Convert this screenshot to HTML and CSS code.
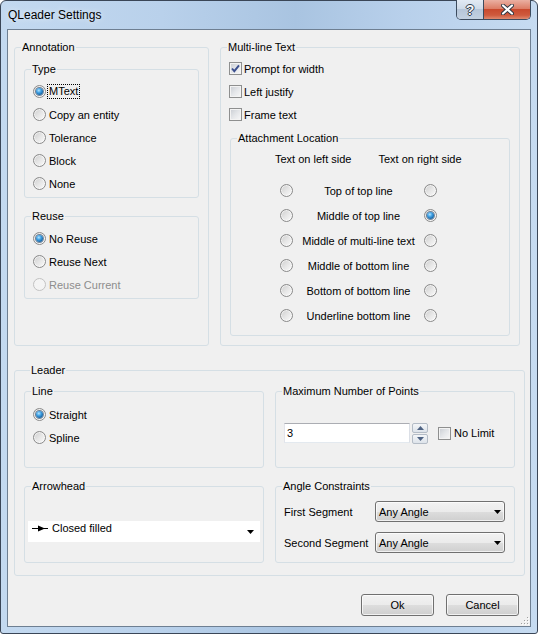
FILE: index.html
```html
<!DOCTYPE html>
<html>
<head>
<meta charset="utf-8">
<title>QLeader Settings</title>
<link rel="stylesheet" href="styles.css">
</head>
<body>
<div class="window">
  <div class="titlebar">
    <span class="title">QLeader Settings</span>
    <div class="caption">
      <span class="cbtn help">?</span>
      <span class="cbtn close">
        <svg width="13" height="11" viewBox="0 0 13 11"><path d="M2 1.5 L11 9.5 M11 1.5 L2 9.5" stroke="#2b3540" stroke-width="4" stroke-linecap="round"/><path d="M2 1.5 L11 9.5 M11 1.5 L2 9.5" stroke="#ffffff" stroke-width="2.2" stroke-linecap="round"/></svg>
      </span>
    </div>
  </div>
  <div class="client">
    <div class="top-row">
      <div class="group annotation">
        <div class="gt">Annotation</div>
        <div class="group sub type">
          <div class="gt">Type</div>
          <div class="radios">
            <div class="row"><span class="radio on"></span><span class="focus">MText</span></div>
            <div class="row"><span class="radio"></span><span>Copy an entity</span></div>
            <div class="row"><span class="radio"></span><span>Tolerance</span></div>
            <div class="row"><span class="radio"></span><span>Block</span></div>
            <div class="row"><span class="radio"></span><span>None</span></div>
          </div>
        </div>
        <div class="group sub reuse">
          <div class="gt">Reuse</div>
          <div class="radios">
            <div class="row"><span class="radio on"></span><span>No Reuse</span></div>
            <div class="row"><span class="radio"></span><span>Reuse Next</span></div>
            <div class="row disabled"><span class="radio"></span><span>Reuse Current</span></div>
          </div>
        </div>
      </div>
      <div class="group multiline">
        <div class="gt">Multi-line Text</div>
        <div class="checks">
          <div class="row"><span class="cb"><svg width="11" height="11" viewBox="0 0 11 11"><path d="M2 5.5 L4.3 8.2 L9 2.3" fill="none" stroke="#3b4f8e" stroke-width="1.9"/></svg></span><span>Prompt for width</span></div>
          <div class="row"><span class="cb"></span><span>Left justify</span></div>
          <div class="row"><span class="cb"></span><span>Frame text</span></div>
        </div>
        <div class="group sub attach">
          <div class="gt">Attachment Location</div>
          <div class="heads"><span>Text on left side</span><span>Text on right side</span></div>
          <div class="attach-grid">
            <span class="radio"></span><span class="alabel">Top of top line</span><span class="radio"></span>
            <span class="radio"></span><span class="alabel">Middle of top line</span><span class="radio on"></span>
            <span class="radio"></span><span class="alabel">Middle of multi-line text</span><span class="radio"></span>
            <span class="radio"></span><span class="alabel">Middle of bottom line</span><span class="radio"></span>
            <span class="radio"></span><span class="alabel">Bottom of bottom line</span><span class="radio"></span>
            <span class="radio"></span><span class="alabel">Underline bottom line</span><span class="radio"></span>
          </div>
        </div>
      </div>
    </div>

    <div class="group leader">
      <div class="gt">Leader</div>
      <div class="leader-grid">
        <div class="group">
          <div class="gt">Line</div>
          <div class="radios line-radios">
            <div class="row"><span class="radio on"></span><span>Straight</span></div>
            <div class="row"><span class="radio"></span><span>Spline</span></div>
          </div>
        </div>
        <div class="group">
          <div class="gt">Maximum Number of Points</div>
          <div class="spinrow">
            <div class="spin-input">3</div>
            <div class="spin-btns">
              <span class="sbtn"><svg width="7" height="4" viewBox="0 0 7 4"><polygon points="0,4 7,4 3.5,0" fill="#4f6383"/></svg></span>
              <span class="sbtn"><svg width="7" height="4" viewBox="0 0 7 4"><polygon points="0,0 7,0 3.5,4" fill="#4f6383"/></svg></span>
            </div>
            <span class="cb nolimit"></span><span class="nl-text">No Limit</span>
          </div>
        </div>
        <div class="group">
          <div class="gt">Arrowhead</div>
          <div class="combo-flat">
            <svg class="arrow-ico" width="16" height="7" viewBox="0 0 16 7"><line x1="0" y1="3.5" x2="16" y2="3.5" stroke="#000" stroke-width="1"/><polygon points="6,0.5 13,3.5 6,6.5" fill="#000"/></svg>
            <span class="flat-text">Closed filled</span>
            <svg class="flat-drop" width="7" height="4" viewBox="0 0 7 4"><polygon points="0,0 7,0 3.5,4" fill="#000"/></svg>
          </div>
        </div>
        <div class="group">
          <div class="gt">Angle Constraints</div>
          <div class="angle-grid">
            <span>First Segment</span>
            <div class="combo"><span>Any Angle</span><svg width="7" height="4" viewBox="0 0 7 4"><polygon points="0,0 7,0 3.5,4" fill="#000"/></svg></div>
            <span>Second Segment</span>
            <div class="combo"><span>Any Angle</span><svg width="7" height="4" viewBox="0 0 7 4"><polygon points="0,0 7,0 3.5,4" fill="#000"/></svg></div>
          </div>
        </div>
      </div>
    </div>

    <div class="buttons">
      <div class="btn">Ok</div>
      <div class="btn">Cancel</div>
    </div>

    <svg class="grip" width="9" height="9" viewBox="0 0 9 9">
      <rect x="7" y="1" width="1" height="1" fill="#a0a0a0"/>
      <rect x="4" y="4" width="1" height="1" fill="#a0a0a0"/>
      <rect x="7" y="4" width="1" height="1" fill="#a0a0a0"/>
      <rect x="1" y="7" width="1" height="1" fill="#a0a0a0"/>
      <rect x="4" y="7" width="1" height="1" fill="#a0a0a0"/>
      <rect x="7" y="7" width="1" height="1" fill="#a0a0a0"/>
      <rect x="8" y="2" width="1" height="1" fill="#fff"/>
      <rect x="5" y="5" width="1" height="1" fill="#fff"/>
      <rect x="8" y="5" width="1" height="1" fill="#fff"/>
      <rect x="2" y="8" width="1" height="1" fill="#fff"/>
      <rect x="5" y="8" width="1" height="1" fill="#fff"/>
      <rect x="8" y="8" width="1" height="1" fill="#fff"/>
    </svg>
  </div>
</div>
</body>
</html>
```

FILE: styles.css
```css
* { box-sizing: border-box; }
html, body { margin: 0; padding: 0; }
body {
  width: 538px;
  height: 634px;
  overflow: hidden;
  background: #ffffff;
  font-family: "Liberation Sans", Arial, sans-serif;
  font-size: 11px;
  color: #000;
}

.window {
  width: 538px;
  height: 634px;
  border: 1px solid #3a4657;
  border-radius: 6px 6px 3px 3px;
  background: linear-gradient(90deg, #c3d9f0 0%, #b9d1eb 30%, #a9c4e1 55%, #b8d0eb 75%, #c6dbf1 100%);
  display: flex;
  flex-direction: column;
}

/* title bar */
.titlebar {
  height: 28px;
  display: flex;
  justify-content: space-between;
  align-items: flex-start;
  padding-left: 7px;
  flex: none;
}
.title {
  font-size: 12px;
  line-height: 28px;
  color: #000;
  text-shadow: 0 0 6px rgba(255,255,255,0.8);
}
.caption {
  display: flex;
  margin: -1px 6px 0 0;
  height: 20px;
  border: 1px solid #3c4b5e;
  border-top: none;
  border-radius: 0 0 5px 5px;
  overflow: hidden;
}
.cbtn {
  display: flex;
  align-items: center;
  justify-content: center;
  height: 19px;
}
.help {
  width: 26px;
  background: linear-gradient(#e2eaf4 0%, #cfdbe9 45%, #b6c6d9 50%, #c3d1e1 100%);
  font-weight: bold;
  font-size: 14px;
  color: #f4f6f8;
  text-shadow: 1px 0 0 #34404e, -1px 0 0 #34404e, 0 1px 0 #34404e, 0 -1px 0 #34404e;
  padding-top: 1px;
}
.close {
  width: 47px;
  border-left: 1px solid #3c4b5e;
  background: linear-gradient(#eab0a2 0%, #dc7e67 45%, #c94a2e 50%, #cf5a3d 80%, #e08a6f 100%);
}

/* client area */
.client {
  flex: 1;
  margin: 0 6px 6px;
  border: 1px solid #6e7f92;
  background: #f0f0f0;
  padding: 17px 5px 0 6px;
  display: flex;
  flex-direction: column;
  position: relative;
}

.group {
  border: 1px solid #d5dfe5;
  border-radius: 3px;
}
.gt {
  margin: -7px 0 0 6px;
  padding: 0 1px;
  background: #f0f0f0;
  width: max-content;
  height: 13px;
  line-height: 13px;
}

.top-row {
  display: flex;
  gap: 11px;
  align-items: stretch;
}
.annotation { width: 195px; }
.multiline { width: 300px; }

.sub { margin: 0 9px; }
.type { margin-top: 15px; }
.reuse { margin-top: 18px; }

.radios { padding: 4px 0 2px 8px; }
.row {
  height: 23px;
  display: flex;
  align-items: center;
}
.row .radio { margin-right: 3px; }
.row.disabled { color: #8d8d8d; }

.radio {
  width: 13px;
  height: 13px;
  flex: none;
  border-radius: 50%;
  border: 1px solid #8a8a8a;
  background: linear-gradient(135deg, #cdcdcd 0%, #e6e6e6 50%, #fbfbfb 100%);
  box-shadow: inset 0 0 0 1px rgba(255,255,255,0.6);
  display: grid;
  place-items: center;
}
.radio.on::after {
  content: "";
  width: 7px;
  height: 7px;
  border-radius: 50%;
  background: radial-gradient(circle at 40% 35%, #b5e6ff 0%, #43a3e6 35%, #13609f 75%, #0d3c68 100%);
  box-shadow: 0 0 0 1px rgba(25,55,90,0.55);
}
.disabled .radio {
  border-color: #c2c2c2;
  background: #f4f4f4;
  box-shadow: none;
}

.focus {
  display: inline-block;
  height: 13px;
  line-height: 13px;
  padding: 0 1px;
  margin-left: -1px;
  outline: 1px dotted #000;
  outline-offset: 0;
}

/* checkboxes */
.checks { padding: 3px 0 0 8px; }
.cb {
  width: 13px;
  height: 13px;
  flex: none;
  border: 1px solid #8e8f8f;
  background: linear-gradient(135deg, #c8ccd2 0%, #e4e6e9 50%, #f8f8f8 100%);
  box-shadow: inset 0 0 0 1px #f3f3f3;
  display: grid;
  place-items: center;
}
.checks .cb { margin-right: 2px; }

/* attachment */
.attach { margin: 12px 9px 9px; padding-bottom: 7px; }
.heads {
  display: flex;
  gap: 27px;
  padding-left: 44px;
  margin-top: 8px;
  line-height: 13px;
}
.attach-grid {
  margin: 12px 0 0 49px;
  display: grid;
  grid-template-columns: 13px 131px 13px;
  grid-auto-rows: 25px;
  align-items: center;
}
.alabel { justify-self: center; white-space: nowrap; }

/* leader */
.leader {
  margin-top: 24px;
  width: 511px;
  padding: 0 9px 12px;
}
.leader-grid {
  margin-top: 14px;
  display: grid;
  grid-template-columns: 240px 240px;
  column-gap: 11px;
  row-gap: 18px;
  grid-auto-rows: 77px;
}
.line-radios { padding-top: 5px; }

.spinrow {
  margin: 24px 0 0 8px;
  height: 22px;
  display: flex;
  align-items: center;
}
.spin-input {
  width: 126px;
  height: 20px;
  background: #fff;
  border: 1px solid;
  border-color: #abadb3 #dbdfe6 #e3e9ef #e2e3ea;
  padding-left: 2px;
  line-height: 18px;
}
.spin-btns {
  margin-left: 2px;
  width: 16px;
  height: 21px;
  display: flex;
  flex-direction: column;
  gap: 1px;
}
.sbtn {
  flex: 1;
  border: 1px solid #b4bcc6;
  border-radius: 2px;
  background: linear-gradient(#f4f6f8, #dde3ea);
  display: flex;
  align-items: center;
  justify-content: center;
}
.nolimit { margin-left: 10px; }
.nl-text { margin-left: 3px; }

.combo-flat {
  margin: 28px 3px 0;
  height: 21px;
  background: #fff;
  display: flex;
  align-items: flex-start;
  padding: 1px 0 0 4px;
}
.flat-text { line-height: 13px; }
.arrow-ico { margin: 3px 4px 0 0; flex: none; }
.flat-drop { margin: 8px 6px 0 auto; flex: none; }

.angle-grid {
  padding: 8px 0 0 8px;
  display: grid;
  grid-template-columns: 91px 130px;
  grid-auto-rows: 21px;
  row-gap: 10px;
  align-items: center;
}
.combo {
  height: 21px;
  border: 1px solid #707070;
  border-radius: 3px;
  background: linear-gradient(#f2f2f2 0%, #ebebeb 50%, #dddddd 51%, #cfcfcf 100%);
  box-shadow: inset 0 0 0 1px rgba(255,255,255,0.7);
  display: flex;
  align-items: center;
  justify-content: space-between;
  padding: 0 3px 0 3px;
}

/* buttons */
.buttons {
  display: flex;
  justify-content: flex-end;
  gap: 12px;
  margin-top: 18px;
  padding-right: 6px;
}
.btn {
  width: 73px;
  height: 22px;
  border: 1px solid #707070;
  border-radius: 3px;
  background: linear-gradient(#f2f2f2 0%, #ebebeb 50%, #dddddd 51%, #cfcfcf 100%);
  box-shadow: inset 0 0 0 1px rgba(255,255,255,0.7);
  display: flex;
  align-items: center;
  justify-content: center;
}

.grip {
  position: absolute;
  right: 1px;
  bottom: 1px;
}
```
